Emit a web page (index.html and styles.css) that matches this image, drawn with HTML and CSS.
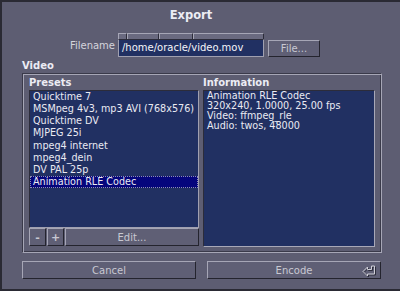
FILE: index.html
```html
<!DOCTYPE html>
<html lang="en">
<head>
    <meta charset="UTF-8">
    <title>Export</title>
    <link rel="stylesheet" href="styles.css">
</head>
<body>
    <div class="window">
        <div class="title">Export</div>

        <div class="file-row">
            <div class="file-label">Filename</div>
            <div class="file-field">
                <div class="tabs">
                    <span class="tab t1"></span>
                    <span class="tab t2"></span>
                    <span class="tab t3"></span>
                    <span class="tab t4"></span>
                </div>
                <div class="input">/home/oracle/video.mov</div>
            </div>
            <button class="btn file-btn">File...</button>
        </div>

        <div class="section-label">Video</div>
        <div class="frame">
            <div class="presets">
                <div class="col-label">Presets</div>
                <div class="list">
                    <div class="item">Quicktime 7</div>
                    <div class="item">MSMpeg 4v3, mp3 AVI (768x576)</div>
                    <div class="item">Quicktime DV</div>
                    <div class="item">MJPEG 25i</div>
                    <div class="item">mpeg4 internet</div>
                    <div class="item">mpeg4_dein</div>
                    <div class="item">DV PAL 25p</div>
                    <div class="item selected">Animation RLE Codec</div>
                </div>
                <div class="list-buttons">
                    <button class="btn small">-</button>
                    <button class="btn small">+</button>
                    <button class="btn edit">Edit...</button>
                </div>
            </div>
            <div class="info">
                <div class="col-label">Information</div>
                <div class="info-box">
                    <div>Animation RLE Codec</div>
                    <div>320x240, 1.0000, 25.00 fps</div>
                    <div>Video: ffmpeg_rle</div>
                    <div>Audio: twos, 48000</div>
                </div>
            </div>
        </div>

        <div class="actions">
            <button class="btn action">Cancel</button>
            <button class="btn action">Encode
                <svg class="enter" width="15" height="12" viewBox="0 0 15 12">
                    <path d="M2 6.5 L6.5 2 L6.5 4.5 L10.5 4.5 L10.5 1 L13.5 1 L13.5 9 L6.5 9 L6.5 11 Z" fill="none" stroke="#2c2c3a" stroke-width="1" transform="translate(1 1)"/>
                    <path d="M2 6.5 L6.5 2 L6.5 4.5 L10.5 4.5 L10.5 1 L13.5 1 L13.5 9 L6.5 9 L6.5 11 Z" fill="none" stroke="#d0d0d8" stroke-width="1"/>
                </svg>
            </button>
        </div>
    </div>
</body>
</html>
```

FILE: styles.css
```css
* {
    margin: 0;
    padding: 0;
    box-sizing: border-box;
}
body {
    background: #5d5d72;
    font-family: 'DejaVu Sans', sans-serif;
    font-size: 10px;
    color: #e6e6ee;
}
.window {
    width: 400px;
    height: 291px;
    border-top: 2px solid #2a2a34;
    border-left: 2px solid #2a2a34;
    border-bottom: 2px solid #2a2a34;
    padding: 5px 0 0 20px;
}
.title {
    width: 378px;
    margin-left: -20px;
    text-align: center;
    font-weight: bold;
    font-size: 11.5px;
    line-height: 16px;
    color: #ececf4;
}

/* filename row */
.file-row {
    display: flex;
    align-items: flex-end;
    margin-top: 10px;
    height: 24px;
}
.file-label {
    width: 93px;
    text-align: right;
    line-height: 18px;
    color: #d4d4dc;
    align-self: flex-end;
    padding-bottom: 2px;
}
.file-field {
    width: 146px;
    margin-left: 3px;
}
.tabs {
    display: flex;
    height: 6px;
}
.tab {
    height: 6px;
    background: #6a6a80;
    border-top: 1px solid #a6a6b6;
    border-left: 1px solid #a6a6b6;
    border-right: 1px solid #2c2c3a;
}
.t1 { width: 9px; }
.t2 { width: 32px; }
.t3 { width: 34px; }
.t4 { width: 71px; }
.input {
    height: 18px;
    background: #213062;
    border: 1px solid #a0a0b0;
    border-top-color: #2c2c3a;
    color: #f4f4f8;
    padding-left: 3px;
    line-height: 16px;
}
.btn {
    font-family: 'DejaVu Sans', sans-serif;
    font-size: 10px;
    color: #c8c8d2;
    background: #5f5f75;
    border: 1px solid #a6a6b6;
    border-right-color: #24242e;
    border-bottom-color: #24242e;
}
.file-btn {
    width: 52px;
    height: 17px;
    margin-left: 4px;
}

/* video frame */
.section-label {
    margin-top: 2px;
    font-weight: bold;
    line-height: 14px;
    color: #ececf4;
}
.frame {
    width: 360px;
    height: 180px;
    display: flex;
    gap: 4px;
    padding: 0 5px 0 5px;
    border: 1px solid #a6a6b6;
    border-top-color: #3a3a4a;
    border-left-color: #3a3a4a;
    box-shadow: inset 1px 1px 0 #a6a6b6, inset -1px -1px 0 #3a3a4a;
}
.col-label {
    font-weight: bold;
    line-height: 15px;
    padding-top: 1px;
    height: 16px;
    color: #ececf4;
}
.presets {
    width: 170px;
    margin-left: 1px;
}
.list {
    height: 138px;
    background: #213062;
    border: 1px solid #a0a0b0;
    border-top-color: #2c2c3a;
    border-left-color: #2c2c3a;
    font-size: 9.65px;
}
.item {
    line-height: 12.15px;
    height: 12.15px;
    padding-left: 3px;
    white-space: nowrap;
    color: #eaeaf2;
}
.item.selected {
    background: #05057c;
    outline: 1px dotted #9090b0;
    outline-offset: -1px;
}
.list-buttons {
    display: flex;
    gap: 1px;
    height: 18px;
}
.small {
    width: 17px;
    font-weight: bold;
    font-size: 11px;
}
.edit {
    flex: 1;
}
.info {
    width: 172px;
}
.info-box {
    height: 157px;
    background: #213062;
    border: 1px solid #a8a8b8;
    border-top-color: #2c2c3a;
    border-left-color: #2c2c3a;
    padding: 0 0 0 3px;
    font-size: 9.65px;
    line-height: 10px;
    color: #eaeaf2;
}

/* bottom buttons */
.actions {
    display: flex;
    gap: 11px;
    margin-top: 8px;
}
.action {
    width: 174px;
    height: 18px;
    position: relative;
}
.enter {
    position: absolute;
    right: 4px;
    top: 3px;
}
```
